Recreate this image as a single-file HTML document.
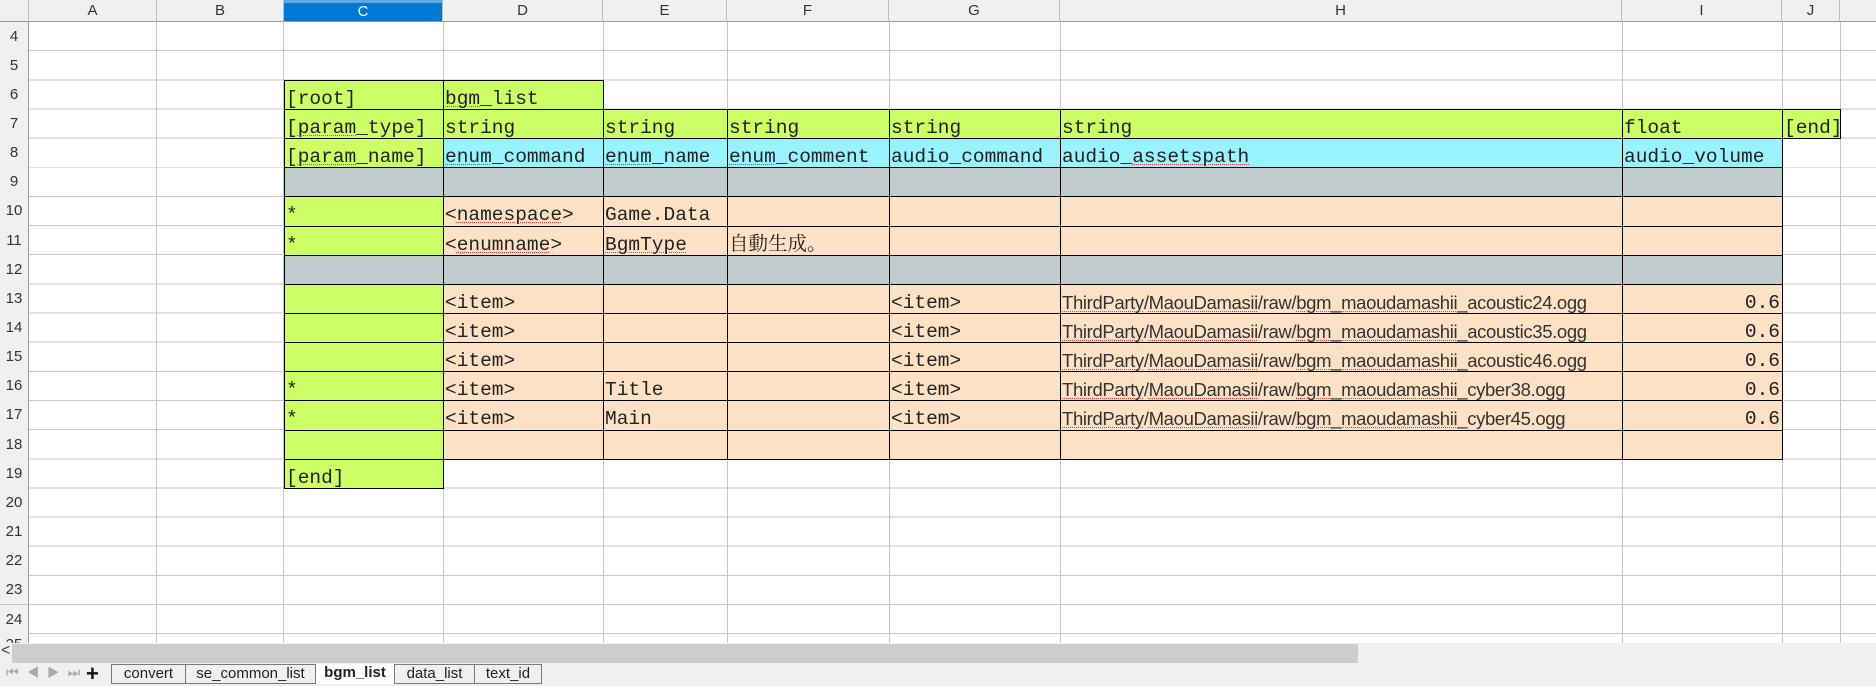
<!DOCTYPE html>
<html><head><meta charset="utf-8"><style>
*{margin:0;padding:0;box-sizing:border-box}
body{width:1876px;height:686px;overflow:hidden;background:#fff;position:relative;font-family:"Liberation Sans",sans-serif}
.hdr{position:absolute;top:0;height:22px;background:#f0f0f0;border-right:1px solid #bdbdbd;border-bottom:1px solid #9a9a9a;font-size:15px;color:#333;text-align:center;line-height:22px}
.vl{position:absolute;top:22px;height:622px;width:1px;background:#c6c6c6}
.hl{position:absolute;left:0;top:21.5px;width:1876px;height:622px;background:repeating-linear-gradient(to bottom,transparent 0 28.15px,#c6c6c6 28.15px 29.15px)}
.rn{position:absolute;left:0;width:29px;height:29.15px;background:#f0f0f0;font-size:15px;color:#333;text-align:center;line-height:30px;border-right:1px solid #9a9a9a}
.c{position:absolute;height:30.15px;border:1px solid #000;font-family:"Liberation Mono","Noto Serif CJK JP",monospace;font-size:19.5px;color:#222;padding-left:1px;line-height:22px;padding-top:7px;white-space:nowrap;overflow:hidden}
.g{background:#ccff66}.b{background:#99f3ff}.s{background:#c0cbcb}.p{background:#fde1c4}
.cC{left:284px;width:160px}.cD{left:443px;width:161px}.cE{left:603px;width:125px}.cF{left:727px;width:163px}.cG{left:889px;width:172px}.cH{left:1060px;width:563px}.cI{left:1622px;width:161px}.cJ{left:1782px;width:59px}
.r6{top:79.8px}.r7{top:108.95px}.r8{top:138.1px}.r9{top:167.25px}.r10{top:196.4px}.r11{top:225.55px}.r12{top:254.7px}.r13{top:283.85px}.r14{top:313px}.r15{top:342.15px}.r16{top:371.3px}.r17{top:400.45px}.r18{top:429.6px}.r19{top:458.75px}
.w{text-decoration:underline dotted #e04040;text-decoration-thickness:1px;text-underline-offset:2px}
.path{font-family:"Liberation Sans",sans-serif;font-size:18.5px;display:inline-block;letter-spacing:-0.35px;color:#333}
.rt{text-align:right;padding-right:2px}
.tab{position:absolute;top:664px;height:20px;border:1px solid #7a7a7a;background:#f0f0f0;font-size:15px;color:#222;text-align:center;line-height:18px}
</style></head><body>
<div class="hl"></div>
<div class="vl" style="left:156px"></div><div class="vl" style="left:283px"></div><div class="vl" style="left:443px"></div><div class="vl" style="left:603px"></div><div class="vl" style="left:727px"></div><div class="vl" style="left:889px"></div><div class="vl" style="left:1060px"></div><div class="vl" style="left:1622px"></div><div class="vl" style="left:1782px"></div><div class="vl" style="left:1840px"></div>

<div class="hdr" style="left:0;width:29px"></div>
<div class="hdr" style="left:29px;width:128px">A</div>
<div class="hdr" style="left:157px;width:127px">B</div>
<div class="hdr" style="left:284px;width:159px;background:#0078d4;color:#fff;border-top:3px solid #5ea9e4;line-height:18px">C</div>
<div class="hdr" style="left:443px;width:160px">D</div>
<div class="hdr" style="left:603px;width:124px">E</div>
<div class="hdr" style="left:727px;width:162px">F</div>
<div class="hdr" style="left:889px;width:171px">G</div>
<div class="hdr" style="left:1060px;width:562px">H</div>
<div class="hdr" style="left:1622px;width:160px">I</div>
<div class="hdr" style="left:1782px;width:58px">J</div>
<div class="hdr" style="left:1840px;width:36px;border-right:none"></div>

<div class="rn" style="top:21.5px">4</div><div class="rn" style="top:50.65px">5</div><div class="rn" style="top:79.8px">6</div><div class="rn" style="top:108.95px">7</div><div class="rn" style="top:138.1px">8</div><div class="rn" style="top:167.25px">9</div><div class="rn" style="top:196.4px">10</div><div class="rn" style="top:225.55px">11</div><div class="rn" style="top:254.7px">12</div><div class="rn" style="top:283.85px">13</div><div class="rn" style="top:313px">14</div><div class="rn" style="top:342.15px">15</div><div class="rn" style="top:371.3px">16</div><div class="rn" style="top:400.45px">17</div><div class="rn" style="top:429.6px">18</div><div class="rn" style="top:458.75px">19</div><div class="rn" style="top:487.9px">20</div><div class="rn" style="top:517.05px">21</div><div class="rn" style="top:546.2px">22</div><div class="rn" style="top:575.35px">23</div><div class="rn" style="top:604.5px">24</div><div class="rn" style="top:633.65px;height:10px;line-height:22px;overflow:hidden">25</div>

<div class="c g cC r6">[root]</div><div class="c g cD r6"><span class="w">bgm</span>_list</div>
<div class="c g cC r7">[<span class="w">param</span>_type]</div><div class="c g cD r7">string</div><div class="c g cE r7">string</div><div class="c g cF r7">string</div><div class="c g cG r7">string</div><div class="c g cH r7">string</div><div class="c g cI r7">float</div><div class="c g cJ r7">[end]</div>
<div class="c g cC r8">[<span class="w">param</span>_name]</div><div class="c b cD r8"><span class="w">enum</span>_command</div><div class="c b cE r8"><span class="w">enum</span>_name</div><div class="c b cF r8"><span class="w">enum</span>_comment</div><div class="c b cG r8">audio_command</div><div class="c b cH r8">audio_<span class="w">assetspath</span></div><div class="c b cI r8">audio_volume</div>
<div class="c s cC r9"></div><div class="c s cD r9"></div><div class="c s cE r9"></div><div class="c s cF r9"></div><div class="c s cG r9"></div><div class="c s cH r9"></div><div class="c s cI r9"></div>
<div class="c g cC r10">*</div><div class="c p cD r10">&lt;<span class="w">namespace</span>&gt;</div><div class="c p cE r10">Game.Data</div><div class="c p cF r10"></div><div class="c p cG r10"></div><div class="c p cH r10"></div><div class="c p cI r10"></div>
<div class="c g cC r11">*</div><div class="c p cD r11">&lt;<span class="w">enumname</span>&gt;</div><div class="c p cE r11"><span class="w">BgmType</span></div><div class="c p cF r11">自動生成。</div><div class="c p cG r11"></div><div class="c p cH r11"></div><div class="c p cI r11"></div>
<div class="c s cC r12"></div><div class="c s cD r12"></div><div class="c s cE r12"></div><div class="c s cF r12"></div><div class="c s cG r12"></div><div class="c s cH r12"></div><div class="c s cI r12"></div>

<div class="c g cC r13"></div><div class="c p cD r13">&lt;item&gt;</div><div class="c p cE r13"></div><div class="c p cF r13"></div><div class="c p cG r13">&lt;item&gt;</div><div class="c p cH r13"><span class="path"><span class="w">ThirdParty</span>/<span class="w">MaouDamasii</span>/raw/<span class="w">bgm</span>_<span class="w">maoudamashii</span>_acoustic24.ogg</span></div><div class="c p cI r13 rt">0.6</div>
<div class="c g cC r14"></div><div class="c p cD r14">&lt;item&gt;</div><div class="c p cE r14"></div><div class="c p cF r14"></div><div class="c p cG r14">&lt;item&gt;</div><div class="c p cH r14"><span class="path"><span class="w">ThirdParty</span>/<span class="w">MaouDamasii</span>/raw/<span class="w">bgm</span>_<span class="w">maoudamashii</span>_acoustic35.ogg</span></div><div class="c p cI r14 rt">0.6</div>
<div class="c g cC r15"></div><div class="c p cD r15">&lt;item&gt;</div><div class="c p cE r15"></div><div class="c p cF r15"></div><div class="c p cG r15">&lt;item&gt;</div><div class="c p cH r15"><span class="path"><span class="w">ThirdParty</span>/<span class="w">MaouDamasii</span>/raw/<span class="w">bgm</span>_<span class="w">maoudamashii</span>_acoustic46.ogg</span></div><div class="c p cI r15 rt">0.6</div>
<div class="c g cC r16">*</div><div class="c p cD r16">&lt;item&gt;</div><div class="c p cE r16">Title</div><div class="c p cF r16"></div><div class="c p cG r16">&lt;item&gt;</div><div class="c p cH r16"><span class="path"><span class="w">ThirdParty</span>/<span class="w">MaouDamasii</span>/raw/<span class="w">bgm</span>_<span class="w">maoudamashii</span>_cyber38.ogg</span></div><div class="c p cI r16 rt">0.6</div>
<div class="c g cC r17">*</div><div class="c p cD r17">&lt;item&gt;</div><div class="c p cE r17">Main</div><div class="c p cF r17"></div><div class="c p cG r17">&lt;item&gt;</div><div class="c p cH r17"><span class="path"><span class="w">ThirdParty</span>/<span class="w">MaouDamasii</span>/raw/<span class="w">bgm</span>_<span class="w">maoudamashii</span>_cyber45.ogg</span></div><div class="c p cI r17 rt">0.6</div>
<div class="c g cC r18"></div><div class="c p cD r18"></div><div class="c p cE r18"></div><div class="c p cF r18"></div><div class="c p cG r18"></div><div class="c p cH r18"></div><div class="c p cI r18"></div>
<div class="c g cC r19">[end]</div>

<div style="position:absolute;left:0;top:643px;width:1876px;height:43px;background:#f0f0f0"></div>
<div style="position:absolute;left:12px;top:644px;width:1346px;height:19px;background:#cdcdcd"></div>
<div style="position:absolute;left:1px;top:642px;font-size:16px;color:#444">&lt;</div>
<div style="position:absolute;left:6px;top:664px;font-size:14px;color:#aaa;letter-spacing:8px">⏮◀▶⏭</div>
<div style="position:absolute;left:86px;top:661px;font-size:22px;font-weight:bold;color:#111">+</div>
<div class="tab" style="left:111px;width:75px">convert</div>
<div class="tab" style="left:185px;width:131px">se_common_list</div>
<div class="tab" style="left:315px;width:80px;background:#fff;border-top:none;border-bottom:none;font-weight:bold">bgm_list</div>
<div class="tab" style="left:394px;width:81px">data_list</div>
<div class="tab" style="left:474px;width:68px">text_id</div>
</body></html>
